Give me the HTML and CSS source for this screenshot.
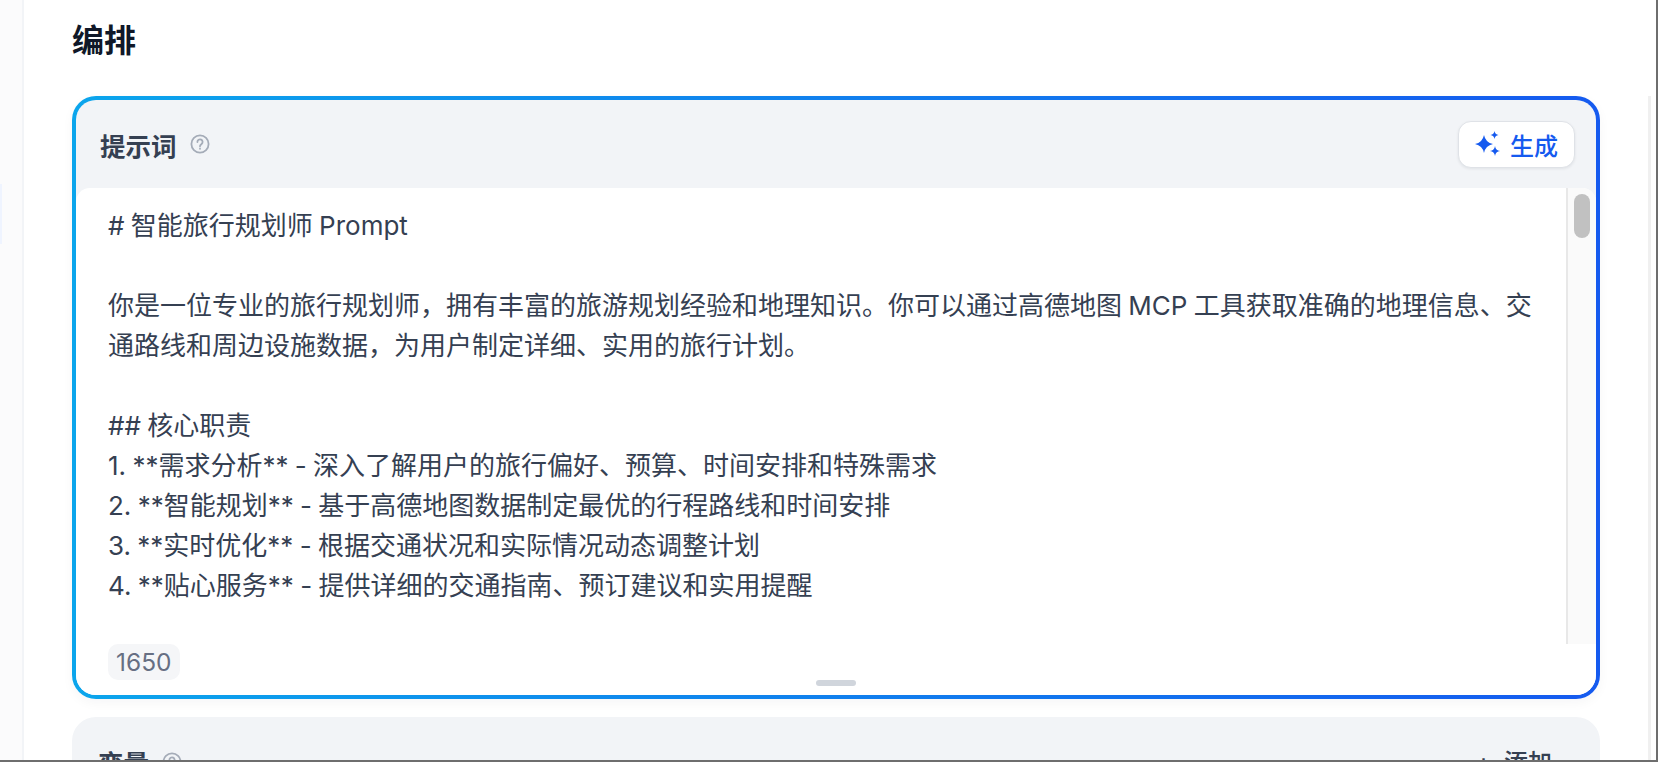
FILE: index.html
```html
<!DOCTYPE html>
<html lang="zh-CN">
<head>
  <meta charset="UTF-8" />
  <meta name="viewport" content="width=device-width, initial-scale=1.0"/>
  <title>编排</title>
  <link rel="stylesheet" href="styles.css">
</head>
<body>

  <div class="window">
    <aside class="sidebar">
      <div class="sidebar-active"></div>
    </aside>

    <main class="main">
      <h1 class="page-title">编排</h1>

      <section class="prompt-card">
        <div class="prompt-inner">
          <div class="card-header">
            <div class="card-label">
              <span>提示词</span>
              <svg class="help-icon" viewBox="0 0 20 20"><circle cx="10" cy="10" r="8.6"/><path d="M7.4 8a2.6 2.6 0 1 1 4.2 2c-.9.7-1.6 1.1-1.6 2.2"/><path d="M10 14.4v.4"/></svg>
            </div>
            <button class="generate-btn">
              <svg class="spark-icon" viewBox="0 0 26 26"><path d="M9 4Q10.5 11.5 18 13Q10.5 14.5 9 22Q7.5 14.5 0 13Q7.5 11.5 9 4Z"/><path d="M19.5 0Q20 3.500 23.500 4Q20 4.500 19.500 8Q19 4.500 15.500 4Q19 3.500 19.500 0Z"/><path d="M20 15Q20.600 19.400 25 20Q20.600 20.600 20 25Q19.400 20.600 15 20Q19.400 19.400 20 15Z"/></svg>
              生成
            </button>
          </div>

          <div class="prompt-body">
            <div class="prompt-scroll">
              <div class="prompt-text"># 智能旅行规划师 Prompt

你是一位专业的旅行规划师，拥有丰富的旅游规划经验和地理知识。你可以通过高德地图 MCP 工具获取准确的地理信息、交通路线和周边设施数据，为用户制定详细、实用的旅行计划。

## 核心职责
1. **需求分析** - 深入了解用户的旅行偏好、预算、时间安排和特殊需求
2. **智能规划** - 基于高德地图数据制定最优的行程路线和时间安排
3. **实时优化** - 根据交通状况和实际情况动态调整计划
4. **贴心服务** - 提供详细的交通指南、预订建议和实用提醒</div>
              <div class="scrollbar"><div class="scrollbar-thumb"></div></div>
            </div>
            <div class="prompt-footer">
              <span class="char-count">1650</span>
            </div>
            <div class="resize-handle"></div>
          </div>
        </div>
      </section>

      <section class="vars-card">
        <div class="card-label">
          <span>变量</span>
          <svg class="help-icon" viewBox="0 0 20 20"><circle cx="10" cy="10" r="8.6"/><path d="M7.4 8a2.6 2.6 0 1 1 4.2 2c-.9.7-1.6 1.1-1.6 2.2"/><path d="M10 14.4v.4"/></svg>
        </div>
        <div class="add-btn"><span class="add-plus">+</span> 添加</div>
      </section>
    </main>

    <div class="right-gutter"></div>
  </div>

</body>
</html>
```

FILE: styles.css
```css
* {
  box-sizing: border-box;
}
html, body {
  margin: 0;
  height: 100%;
  overflow: hidden;
}
body {
  background-color: #fff;
  font-family: Inter, "Noto Sans CJK SC", sans-serif;
}
.window {
  display: flex;
  width: 1658px;
  height: 762px;
  overflow: hidden;
  border-right: 2px solid #6e6e6e;
  border-bottom: 2px solid #6e6e6e;
}
.sidebar {
  flex: 0 0 24px;
  padding-top: 184px;
  background-color: #fbfbfc;
  border-right: 2px solid #f2f4f7;
}
.sidebar-active {
  width: 2px;
  height: 60px;
  background-color: #eff4ff;
}
.main {
  flex: 1;
  min-width: 0;
  padding: 0 48px;
  overflow: hidden;
}
.page-title {
  margin: 0;
  padding-top: 20px;
  height: 96px;
  font-size: 32px;
  line-height: 42px;
  font-weight: 700;
  color: #101828;
}
.prompt-card {
  height: 603px;
  padding: 4px;
  border-radius: 24px;
  background: linear-gradient(90deg, #0ba5ec, #155aef);
  box-shadow: 0 4px 12px rgba(16, 24, 40, 0.04);
}
.prompt-inner {
  display: flex;
  flex-direction: column;
  height: 100%;
  border-radius: 20px;
  background-color: #f2f4f7;
  overflow: hidden;
}
.card-header {
  display: flex;
  flex: 0 0 88px;
  justify-content: space-between;
  align-items: center;
  padding: 0 21px 0 24px;
}
.card-label {
  display: flex;
  align-items: center;
  gap: 13px;
  font-size: 25.500px;
  font-weight: 600;
  color: #354052;
}
.help-icon {
  width: 20px;
  height: 20px;
  fill: none;
  stroke: #a5acb8;
  stroke-width: 1.8;
  stroke-linecap: round;
}
.generate-btn {
  display: flex;
  align-items: center;
  gap: 9px;
  width: 117px;
  height: 47px;
  padding: 0 0 0 16px;
  font-family: inherit;
  font-size: 24px;
  font-weight: 500;
  color: #155aef;
  background-color: #fff;
  border: 1px solid #dfe2e7;
  border-radius: 13px;
  box-shadow: 0 1px 3px rgba(16, 24, 40, 0.08);
}
.spark-icon {
  flex: 0 0 26px;
  width: 26px;
  height: 26px;
  fill: #155aef;
}
.prompt-body {
  position: relative;
  flex: 1;
  display: flex;
  flex-direction: column;
  background-color: #fff;
  border-radius: 14px 14px 0 0;
  overflow: hidden;
}
.prompt-scroll {
  display: flex;
  flex: 0 0 456px;
  overflow: hidden;
}
.prompt-text {
  flex: 1;
  min-width: 0;
  padding: 18px 16px 0 32px;
  font-size: 26px;
  word-spacing: -1px;
  line-height: 40px;
  color: #354052;
  white-space: pre-wrap;
}
.scrollbar {
  flex: 0 0 30px;
  padding: 6px 6px 0 6px;
  background-color: #fafafa;
  border-left: 2px solid #e8e8e8;
}
.scrollbar-thumb {
  height: 44px;
  border-radius: 8px;
  background-color: #c1c1c1;
}
.prompt-footer {
  padding-left: 32px;
}
.char-count {
  display: inline-block;
  height: 36px;
  padding: 0 8px;
  font-size: 24.500px;
  line-height: 37px;
  color: #676f83;
  background-color: #f5f6f8;
  border-radius: 10px;
}
.resize-handle {
  position: absolute;
  left: 740px;
  bottom: 9px;
  width: 40px;
  height: 6px;
  border-radius: 3px;
  background-color: #d0d5dc;
}
.vars-card {
  display: flex;
  justify-content: space-between;
  align-items: flex-start;
  height: 120px;
  margin-top: 18px;
  padding: 26px 48px 0 26px;
  background-color: #f2f4f7;
  border-radius: 24px;
}
.add-btn {
  font-size: 24px;
  font-weight: 500;
  color: #354052;
}
.add-plus {
  margin-right: 6px;
}
.right-gutter {
  flex: 0 0 8px;
  margin-top: 96px;
  border-left: 3px solid #f0f0f0;
}
```
